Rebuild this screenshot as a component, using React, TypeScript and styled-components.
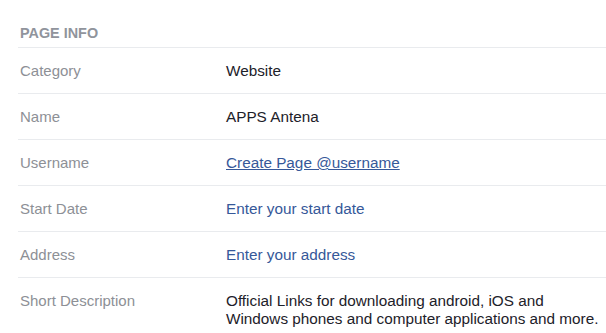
import styled, { createGlobalStyle } from "styled-components";

const GlobalStyle = createGlobalStyle`
  html, body {
    margin: 0;
    padding: 0;
    background: #ffffff;
  }
  body {
    font-family: "Liberation Sans", Arial, Helvetica, sans-serif;
    font-size: 15px;
    color: #1d2129;
  }
`;

const Panel = styled.section`
  width: 606px;
  height: 333px;
  overflow: hidden;
  padding-left: 18px;
  box-sizing: border-box;
`;

const Title = styled.h3`
  margin: 0;
  padding: 24px 0 5px 2px;
  font-size: 14.4px;
  line-height: 18px;
  font-weight: bold;
  color: #90949c;
  border-bottom: 1px solid #e9ebee;
`;

const Row = styled.div`
  display: grid;
  grid-template-columns: 208px 1fr;
  padding: 14px 0 13px;
  line-height: 18px;
  border-bottom: 1px solid #e9ebee;

  &:last-child {
    border-bottom: none;
  }
`;

const Label = styled.div`
  padding-left: 2px;
  color: #8d9096;
`;

const Value = styled.div<{ $link?: boolean }>`
  font-size: 15.3px;
  color: ${(p) => (p.$link ? "#365899" : "#1d2129")};
`;

const Underlined = styled.a`
  color: #365899;
  text-decoration: underline;
  cursor: pointer;
`;

const App = () => {
  return (
    <>
      <GlobalStyle />
      <Panel>
        <Title>PAGE INFO</Title>
        <Row>
          <Label>Category</Label>
          <Value>Website</Value>
        </Row>
        <Row>
          <Label>Name</Label>
          <Value>APPS Antena</Value>
        </Row>
        <Row>
          <Label>Username</Label>
          <Value>
            <Underlined>Create Page @username</Underlined>
          </Value>
        </Row>
        <Row>
          <Label>Start Date</Label>
          <Value $link>Enter your start date</Value>
        </Row>
        <Row>
          <Label>Address</Label>
          <Value $link>Enter your address</Value>
        </Row>
        <Row>
          <Label>Short Description</Label>
          <Value>
            Official Links for downloading android, iOS and
            <br />
            Windows phones and computer applications and more.
          </Value>
        </Row>
      </Panel>
    </>
  );
};

export default App;
